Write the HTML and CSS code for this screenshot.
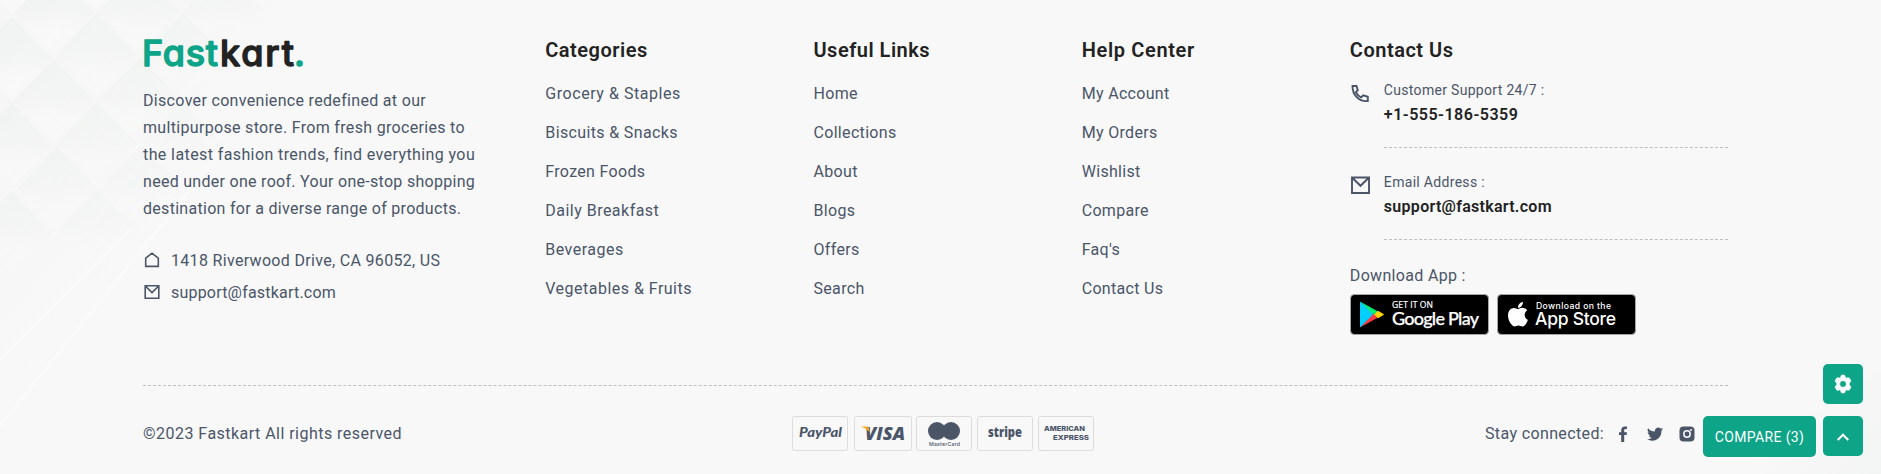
FILE: index.html
```html
<!DOCTYPE html>
<html lang="en">
<head>
<meta charset="utf-8">
<title>Fastkart</title>
<link rel="stylesheet" href="styles.css">
</head>
<body>
<svg class="pattern" width="1881" height="474" aria-hidden="true">
  <defs>
    <linearGradient id="tile" x1="0" y1="0" x2="0" y2="1"><stop offset="0" stop-color="#eff3f1"/><stop offset=".45" stop-color="#f2f4f3"/><stop offset=".7" stop-color="#f7f8f7"/><stop offset="1" stop-color="#f8f8f8"/></linearGradient>
    <linearGradient id="fade" gradientUnits="userSpaceOnUse" x1="20" y1="20" x2="250" y2="200"><stop offset="0" stop-color="#fff"/><stop offset=".4" stop-color="#bbb"/><stop offset="1" stop-color="#000"/></linearGradient>
    <linearGradient id="band" gradientUnits="userSpaceOnUse" x1="0" y1="100" x2="180" y2="250"><stop offset="0" stop-color="#f5f6f5"/><stop offset="1" stop-color="#f8f8f8"/></linearGradient>
    <linearGradient id="corner" gradientUnits="userSpaceOnUse" x1="1790" y1="410" x2="1881" y2="474"><stop offset="0" stop-color="#f8f8f8"/><stop offset="1" stop-color="#f3f4f4"/></linearGradient>
    <mask id="reach"><rect width="400" height="400" fill="url(#fade)"/></mask>
  </defs>
  <path d="M0 0h330L0 400z" fill="url(#band)"/>
  <g fill="url(#tile)" mask="url(#reach)">
    <path id="d" d="M12 17l40 42-40 42-40-42z"/>
    <use href="#d" x="85" y="-4"/><use href="#d" x="42" y="-46"/><use href="#d" x="42" y="42"/><use href="#d" y="86"/><use href="#d" x="85" y="85"/><use href="#d" x="127" y="-47"/><use href="#d" x="128" y="41"/><use href="#d" x="171" y="-4"/><use href="#d" x="212" y="-48"/><use href="#d" x="45" y="130"/><use href="#d" y="174"/><use href="#d" y="-86"/><use href="#d" x="85" y="-90"/><use href="#d" x="170" y="84"/><use href="#d" x="130" y="128"/><use href="#d" x="86" y="172"/>
  </g>
  <path d="M130 230L-10 370M230 140L-10 438" stroke="#fafafa" stroke-width="3"/>
  <path d="M1881 370V474H1720z" fill="url(#corner)"/>
</svg>
<footer class="footer">
  <div class="columns">
    <section class="about">
      <svg class="logo" width="164" height="34" viewBox="0 0 164 34" role="img" aria-label="Fastkart.">
        <text class="green" x="0" y="29.800" textLength="76">Fast</text><text class="dark" x="78" y="29.800" textLength="74">kart</text><text class="green" x="152" y="29.800">.</text>
      </svg>
      <p class="intro"><span class="l1">Discover convenience redefined at our</span><br><span class="l2">multipurpose store. From fresh groceries to</span><br><span class="l3">the latest fashion trends, find everything you</span><br><span class="l4">need under one roof. Your one-stop shopping</span><br><span class="l5">destination for a diverse range of products.</span></p>
      <div class="line"><svg width="16" height="16" viewBox="0 0 16 16"><path d="M1.700 6.200L8 1.200l6.300 5v8.200H1.700z"/></svg><span class="addr">1418 Riverwood Drive, CA 96052, US</span></div>
      <div class="line"><svg width="16" height="16" viewBox="0 0 16 16"><path d="M1.200 1.700h13.600v12.600H1.200zM1.500 2.200L8 8.600l6.500-6.400"/></svg><span class="mail">support@fastkart.com</span></div>
    </section>
    <section><h4>Categories</h4><ul><li><a class="k1">Grocery &amp; Staples</a></li><li><a class="k2">Biscuits &amp; Snacks</a></li><li><a>Frozen Foods</a></li><li><a class="k4">Daily Breakfast</a></li><li><a class="k4">Beverages</a></li><li><a class="k4">Vegetables &amp; Fruits</a></li></ul></section>
    <section><h4>Useful Links</h4><ul><li><a>Home</a></li><li><a>Collections</a></li><li><a>About</a></li><li><a>Blogs</a></li><li><a>Offers</a></li><li><a>Search</a></li></ul></section>
    <section><h4 class="help">Help Center</h4><ul><li><a>My Account</a></li><li><a>My Orders</a></li><li><a>Wishlist</a></li><li><a>Compare</a></li><li><a>Faq's</a></li><li><a>Contact Us</a></li></ul></section>
    <section class="contact">
      <h4>Contact Us</h4>
      <div class="item"><svg width="20" height="20" viewBox="0 0 20 20"><path d="M2.500 2h4l1.300 4.200-2 2a12 12 0 0 0 5.400 5.200l2-2 4.600 1.400v4.200C8.600 18 2.400 10.700 2.500 2z"/></svg><div class="detail"><span class="label">Customer Support 24/7 :</span><strong class="phone">+1-555-186-5359</strong></div></div>
      <div class="item"><svg width="20" height="20" viewBox="0 0 20 20"><path d="M2 2.500h17v15.500H2zM2.500 3l8 7.800L18.500 3"/></svg><div class="detail"><span class="label">Email Address :</span><strong class="email">support@fastkart.com</strong></div></div>
      <div class="download">Download App :</div>
      <div class="stores">
        <svg width="139" height="41" viewBox="0 0 139 41"><rect x=".5" y=".5" width="138" height="40" rx="4" fill="#000" stroke="#a6a6a6"/><path d="M10 7.500l18 10-5 4z" fill="#00f076"/><path d="M10 33.500l18-10-5-4z" fill="#ff3a44"/><path d="M28 16.700l5.500 3.200q.8.600 0 1.200L28 24.300l-4-3.800z" fill="#ffd400"/><path d="M10 7.500L23 20.500 10 33.500z" fill="#00cfff"/><text class="get" x="42" y="13.500" textLength="41">GET IT ON</text><text class="gp" x="42" y="30.500" textLength="87">Google Play</text></svg>
        <svg width="139" height="41" viewBox="0 0 139 41"><rect x=".5" y=".5" width="138" height="40" rx="4" fill="#000" stroke="#a6a6a6"/><path transform="translate(9.300 6) scale(1.080)" fill="#fff" d="M17 14c0-3 2.300-4.300 2.500-4.400-1.400-2-3.500-2.300-4.200-2.300-1.800-.2-3.500 1-4.400 1s-2.300-1-3.700-1c-2 0-3.700 1.100-4.700 2.800-2 3.500-.5 8.700 1.400 11.500 1 1.400 2.100 3 3.600 2.900s2-.9 3.700-.9 2.200.9 3.700.9 2.500-1.400 3.500-2.800c1.100-1.600 1.500-3.100 1.600-3.200-.1 0-3-1.200-3-4.500zM14.200 5.500c.8-1 1.300-2.300 1.200-3.700-1.200.1-2.600.8-3.400 1.800-.7.900-1.400 2.200-1.200 3.600 1.300.1 2.600-.7 3.400-1.700z"/><text class="dl" x="39" y="14.500" textLength="75">Download on the</text><text class="as" x="38" y="31" textLength="81">App Store</text></svg>
      </div>
    </section>
  </div>
  <div class="bottom">
    <div class="copy">©2023 Fastkart All rights reserved</div>
    <svg class="pay" width="302" height="35" viewBox="0 0 302 35">
      <g class="boxes"><rect x=".5" y=".5" width="55" height="34" rx="2"/><rect x="62.500" y=".5" width="57" height="34" rx="2"/><rect x="124.500" y=".5" width="55" height="34" rx="2"/><rect x="185.500" y=".5" width="55" height="34" rx="2"/><rect x="246.500" y=".5" width="55" height="34" rx="2"/></g>
      <text class="paypal" x="7" y="21" textLength="43" lengthAdjust="spacingAndGlyphs">PayPal</text>
      <text class="visa" x="73" y="24" textLength="40" lengthAdjust="spacingAndGlyphs">VISA</text><path d="M69 10.500h6q1.500 0 1.800 1.500l1 4.500q-3-4-8.800-6z" fill="#f9a51a"/>
      <circle cx="145" cy="15" r="9"/><circle cx="159" cy="15" r="9"/><text class="mc" x="137" y="30.300" textLength="31">MasterCard</text>
      <text class="stripe" x="196" y="21" textLength="34" lengthAdjust="spacingAndGlyphs">stripe</text>
      <text class="amex" x="252" y="14.800" textLength="41" lengthAdjust="spacingAndGlyphs">AMERICAN</text><text class="amex" x="261" y="24.300" textLength="36" lengthAdjust="spacingAndGlyphs">EXPRESS</text>
    </svg>
    <div class="social"><span>Stay connected:</span>
      <svg width="16" height="16" viewBox="0 0 16 16"><path d="M6.200 16V9H4V6.200h2.200V4.300C6.200 1.800 7.600.5 10 .5c.9 0 1.700.1 2 .1v2.500h-1.500C9.400 3.100 9.200 3.700 9.200 4.600v1.600H12L11.600 9H9.200v7z"/></svg>
      <svg width="16" height="16" viewBox="0 0 16 16"><path d="M16 3.100a6 6 0 0 1-1.900.5 3.300 3.300 0 0 0 1.500-1.800 6 6 0 0 1-2.100.8 3.300 3.300 0 0 0-5.600 3A9.300 9.300 0 0 1 1.100 2.200a3.300 3.300 0 0 0 1 4.400 3.300 3.300 0 0 1-1.500-.4 3.300 3.300 0 0 0 2.700 3.200 3.300 3.300 0 0 1-1.500.1 3.300 3.300 0 0 0 3.100 2.300A6.600 6.600 0 0 1 0 13.100 9.300 9.300 0 0 0 14.400 4.800 6.600 6.600 0 0 0 16 3.100z"/></svg>
      <svg width="16" height="16" viewBox="0 0 16 16"><rect x=".5" y=".5" width="15" height="15" rx="4"/><circle cx="8" cy="8" r="3.200" fill="none" stroke="#f8f8f8" stroke-width="1.500"/><circle cx="12" cy="3.900" r="1" fill="#f8f8f8"/></svg>
    </div>
  </div>
</footer>
<div class="floating">
  <button class="compare">COMPARE (3)</button>
  <div class="stack">
    <button><svg width="20" height="20" viewBox="0 0 20 20"><path fill="#fff" stroke="#fff" stroke-width=".6" fill-rule="evenodd" d="M8 2q.3-1 1.200-1h1.600q.9 0 1.200 1l.4 1.500 1 .6 1.600-.4q1-.2 1.500.6l1.200 1.900q.4.900-.2 1.500L16.300 9v2l1.200 1.300q.6.600.2 1.500l-1.200 1.900q-.5.800-1.500.6l-1.600-.4-1 .6L12 18q-.3 1-1.200 1H9.200q-.9 0-1.200-1l-.4-1.500-1-.6-1.600.4q-1 .2-1.500-.6l-1.200-1.900q-.4-.9.200-1.500L3.700 11V9L2.500 7.700q-.6-.6-.2-1.500l1.200-1.900q.5-.8 1.500-.6l1.600.4 1-.6zM10 6.700a3.300 3.300 0 1 0 0 6.600 3.300 3.300 0 0 0 0-6.600z"/></svg></button>
    <button><svg width="20" height="20" viewBox="0 0 20 20"><path d="M4.700 14L10 8.700 15.300 14" fill="none" stroke="#fff" stroke-width="2"/></svg></button>
  </div>
</div>
</body>
</html>
```

FILE: styles.css
```css
* { box-sizing: border-box; }
body { margin: 0; width: 1881px; height: 474px; overflow: hidden; background: #f8f8f8; color: #4a5568; font-family: Roboto, "Liberation Sans", sans-serif; font-size: 16px; letter-spacing: .32px; }
.pattern { position: absolute; left: 0; top: 0; }
.footer { position: relative; padding: 36px 153px 0 143px; }
.columns { display: grid; grid-template-columns: 378.300px 244.200px 244.200px 244.200px 378.200px; column-gap: 24px; height: 350px; border-bottom: 1px dashed #bfbfbf; width: 1585px; }
.logo { display: block; overflow: visible; margin-left: -1px; }
.logo text { font: 500 36px/1 Inter, sans-serif; font-feature-settings: "cv11"; stroke-width: 1.300px; stroke-linejoin: round; letter-spacing: 0; }
.green { fill: #0da487; stroke: #0da487; }
.dark { fill: #222; stroke: #222; }
.intro { margin: 17px 0 22px; line-height: 27px; white-space: nowrap; }
.l3 { letter-spacing: .4px; }
.l4, .l5 { letter-spacing: .29px; }
.mail { letter-spacing: .2px; }
.copy { letter-spacing: .47px; }
.line { display: flex; gap: 12px; align-items: center; height: 32px; }
.line svg, .item > svg { fill: none; stroke: #4a5568; stroke-width: 1.600; flex: none; margin-left: 1px; }
.line svg { margin-right: -1px; }
h4 { margin: 1px 0 0; height: 27px; line-height: 27px; font-size: 20px; font-weight: 600; color: #222; letter-spacing: .5px; }
.help { letter-spacing: .65px; }
ul { list-style: none; margin: 18px 0 0; padding: 0; display: grid; row-gap: 15px; }
li { line-height: 24px; white-space: nowrap; }
.k1 { letter-spacing: .55px; }
.k2 { letter-spacing: .36px; }
.k4 { letter-spacing: .48px; }
.item { display: flex; gap: 14px; }
.item > svg { margin-top: 8px; margin-left: 0; stroke-width: 1.900; }
.contact h4 { margin-bottom: 12px; }
.contact .item { height: 72px; }
.contact .item:nth-child(2) { margin-bottom: 20px; }
.contact .item:nth-child(3) > svg { margin-top: 7px; }
.detail { flex: 1; display: flex; flex-direction: column; border-bottom: 1px dashed #bfbfbf; padding-top: 3px; }
.label { font-size: 14px; line-height: 23px; letter-spacing: .31px; }
.detail strong { line-height: 26px; font-weight: 600; color: #222; }
.detail .phone { letter-spacing: .5px; }
.detail .email { letter-spacing: .28px; }
.download { margin-top: 24px; line-height: 24px; }
.stores { display: flex; gap: 8px; margin-top: 6px; }
.stores text { fill: #fff; letter-spacing: 0; }
.stores .get { font: 400 8.500px "Open Sans", sans-serif; stroke: #fff; stroke-width: .200px; }
.stores .dl { font: 500 8.600px Inter, sans-serif; }
.stores .gp { font: 500 18px Lato, sans-serif; stroke: #fff; stroke-width: .250px; }
.stores .as { font: 500 17.500px Inter, sans-serif; }
.bottom { display: grid; grid-template-columns: 649px 693px 1fr; align-items: center; margin-top: 30px; height: 35px; }
.pay text, .pay circle { fill: #4a5568; }
.pay text { letter-spacing: 0; }
.boxes rect { fill: none; stroke: #dcdcdc; }
.pay .paypal { font: italic 900 13px Lato, sans-serif; }
.pay .visa { font: italic 800 18px "Open Sans", sans-serif; }
.pay .mc { font: 500 5.200px Inter, sans-serif; }
.pay .stripe { font: 800 13.500px "Open Sans", sans-serif; }
.pay .amex { font: 800 6.800px Inter, sans-serif; }
.social { display: flex; align-items: center; fill: #4a5568; white-space: nowrap; }
.social span { width: 130px; letter-spacing: .37px; }
.social svg { margin-right: 16px; }
.floating { position: absolute; right: 18px; top: 364px; display: flex; align-items: flex-end; gap: 7px; }
.stack { display: grid; gap: 12px; }
button { border: 0; padding: 0; width: 40px; height: 40px; border-radius: 5px; background: #0da487; display: grid; place-items: center; color: #fff; font: 14px Roboto, sans-serif; letter-spacing: .35px; }
.compare { width: 113px; height: 41px; margin-bottom: -1px; }
```
